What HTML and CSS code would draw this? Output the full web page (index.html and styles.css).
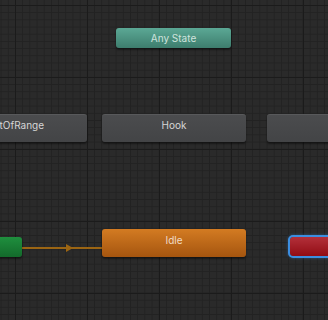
FILE: index.html
```html
<!DOCTYPE html>
<html lang="en">
<head>
  <meta charset="UTF-8" />
  <title>Animator</title>
  <link rel="stylesheet" href="styles.css">
</head>
<body>

  <!-- Animator graph -->
  <div class="graph">

    <!-- transition Entry -> Idle -->
    <div class="transition">
      <span class="arrow"></span>
    </div>

    <div class="state any-state">Any State</div>

    <div class="state normal out-of-range">OutOfRange</div>
    <div class="state normal hook">Hook</div>
    <div class="state normal right-state"></div>

    <div class="state entry"></div>
    <div class="state big idle">Idle</div>
    <div class="state exit selected"></div>

  </div>

</body>
</html>
```

FILE: styles.css
```css
body {
  margin: 0;
  background: #2a2a2a;
  font-family: Inter, "Noto Sans", sans-serif;
  overflow: hidden;
}

/* Grid background */
.graph {
  position: relative;
  width: 328px;
  height: 320px;
  overflow: hidden;
  background-color: #2a2a2a;
  background-image:
    linear-gradient(to right, #1b1b1b 1px, transparent 1px),
    linear-gradient(to bottom, #1b1b1b 1px, transparent 1px),
    linear-gradient(to right, #222 1px, transparent 1px),
    linear-gradient(to bottom, #222 1px, transparent 1px);
  background-size: 72px 72px, 72px 72px, 7.2px 7.2px, 7.2px 7.2px;
  background-position: 15px 5px, 15px 5px, 15px 5px, 15px 5px;
}

/* State nodes */
.state {
  position: absolute;
  display: flex;
  align-items: center;
  justify-content: center;
  box-sizing: border-box;
  border-radius: 3px;
  font-size: 10px;
  line-height: 12px;
  color: #d6d6d6;
  white-space: nowrap;
  box-shadow: 0 2px 2px rgba(0,0,0,0.45);
}

/* big nodes keep their name near the top */
.normal, .big {
  align-items: flex-start;
  padding-top: 5px;
  width: 144px;
  height: 28px;
}

.normal {
  top: 114px;
  padding-top: 4px;
  background: linear-gradient(#4b4c4e, #434446);
  border-top: 1px solid #58595b;
}

.out-of-range { left: -57px; }
.hook { left: 102px; }
.right-state { left: 267px; }

.any-state {
  left: 116px;
  top: 28px;
  width: 115px;
  height: 20px;
  background: linear-gradient(#5ba895, #3d7d6d);
  color: #cfe3dd;
}

.entry {
  left: -93px;
  top: 237px;
  width: 115px;
  height: 20px;
  background: linear-gradient(#1f8f3e, #136a2b);
}

.idle {
  left: 102px;
  top: 229px;
  background: linear-gradient(#d37b22, #a5550f);
  color: #f1dcc6;
}

.exit {
  left: 290px;
  top: 237px;
  width: 115px;
  height: 19px;
  background: linear-gradient(#b3303a, #920c14);
}

.selected {
  outline: 2px solid #3c8ee0;
  box-shadow: 0 0 3px 2px rgba(60,142,224,0.45);
}

/* Transition line */
.transition {
  position: absolute;
  left: 22px;
  top: 247px;
  width: 80px;
  height: 2px;
  background: #9b6513;
}

.arrow {
  position: absolute;
  left: 44px;
  top: -3px;
  width: 0;
  height: 0;
  border-top: 4px solid transparent;
  border-bottom: 4px solid transparent;
  border-left: 7px solid #9b6513;
}
```
